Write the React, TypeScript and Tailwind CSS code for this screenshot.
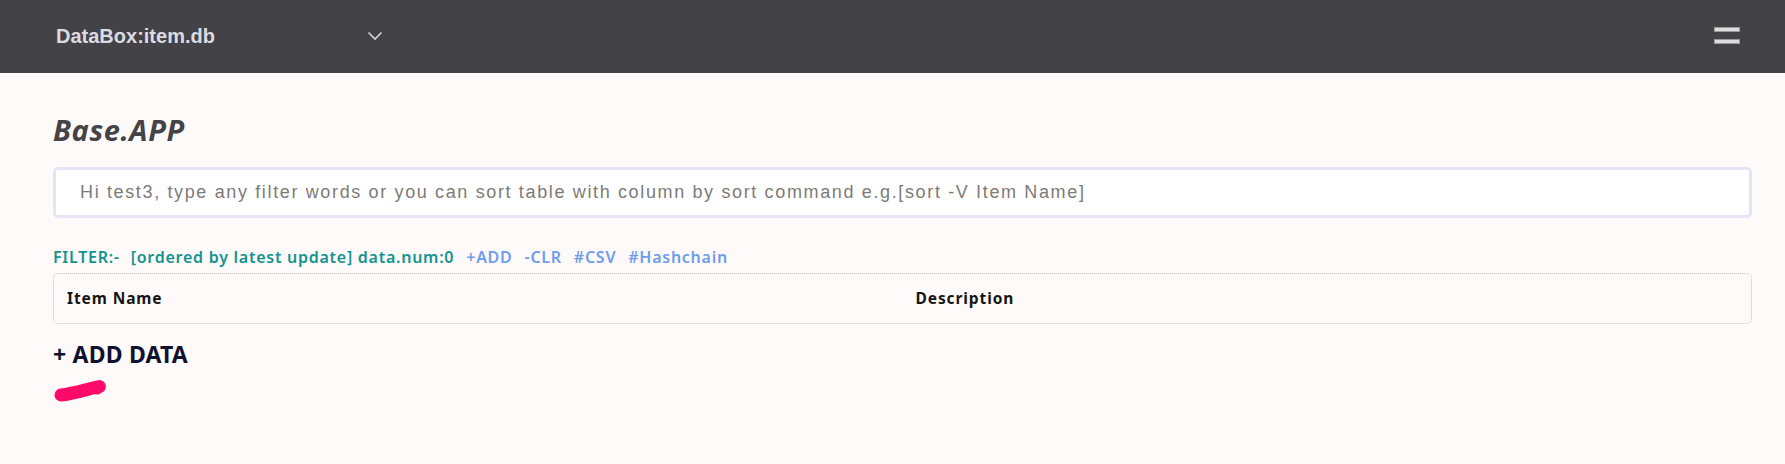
import { useState } from "react";

const FILTER_LINKS = ["+ADD", "-CLR", "#CSV", "#Hashchain"];

function Header() {
  return (
    <header className="h-[73px] bg-[#434247] flex items-center pl-[56px] pr-[45px]">
      <div className="flex items-center w-[327px] justify-between">
        <span className="font-['Liberation_Sans',Arial,sans-serif] font-bold text-[20px] text-[#dcdbe0] leading-none -mt-[1px]">
          DataBox:item.db
        </span>
        <svg width="16" height="10" viewBox="0 0 16 10" className="-mt-[1px]">
          <polyline points="1.5,1.5 8,8 14.5,1.5" fill="none" stroke="#d4d3d8" strokeWidth="1.6" />
        </svg>
      </div>
      <button className="ml-auto flex flex-col gap-[7px] mt-[-2px]">
        <span className="block w-[26px] h-[5px] bg-[#dedede] border border-[#9a9a9a]" />
        <span className="block w-[26px] h-[5px] bg-[#dedede] border border-[#9a9a9a]" />
      </button>
    </header>
  );
}

export default function App() {
  const [query, setQuery] = useState("");

  return (
    <div className="min-h-[464px] bg-[#fefaf9]">
      <Header />

      <main className="pl-[53px] pr-[33px]">
        {/* title */}
        <h1 className="pt-[40px] font-['Open_Sans',sans-serif] italic font-bold text-[29px] leading-[34px] text-[#444348] tracking-[0.6px]">
          Base.APP
        </h1>

        {/* filter input */}
        <input
          value={query}
          onChange={(e) => setQuery(e.target.value)}
          placeholder="Hi test3, type any filter words or you can sort table with column by sort command e.g.[sort -V Item Name]"
          className="mt-[20px] block w-full h-[51px] bg-white border-[3px] border-[#e4e4f6] rounded-[5px] pl-[24px] font-['Liberation_Sans',Arial,sans-serif] text-[18px] tracking-[1.64px] text-[#555] placeholder:text-[#7d7a78] outline-none"
        />

        {/* filter status */}
        <div className="mt-[29px] flex items-baseline font-['Noto_Sans',sans-serif] font-semibold text-[16px] leading-[21px] tracking-[0.74px]">
          <span className="text-[#12948f]">FILTER:-</span>
          <span className="ml-[11px] text-[#12948f]">[ordered by latest update] data.num:0</span>
          {FILTER_LINKS.map((l) => (
            <a key={l} className="ml-[12px] text-[#6e9deb] cursor-pointer">
              {l}
            </a>
          ))}
        </div>

        {/* table */}
        <div className="mt-[5px] h-[51px] border border-dotted border-[#c4c4c4] rounded-[5px] grid grid-cols-2 items-center font-['Noto_Sans',sans-serif] font-bold text-[15.5px] tracking-[0.9px] text-[#151515]">
          <div className="px-[13px]">Item Name</div>
          <div className="px-[13px]">Description</div>
        </div>

        {/* add */}
        <button className="mt-[15px] block font-['Noto_Sans',sans-serif] font-bold text-[23px] leading-[30px] text-[#101030] tracking-[0.2px]">
          + ADD DATA
        </button>
        <svg width="60" height="30" viewBox="0 0 60 30" className="mt-[8px] -ml-[2px] block">
          <path d="M10 18 C 20 17, 30 14, 42 11 S 45 10.5, 46 11" fill="none" stroke="#ff0a6a" strokeWidth="13" strokeLinecap="round" />
        </svg>
      </main>
    </div>
  );
}
